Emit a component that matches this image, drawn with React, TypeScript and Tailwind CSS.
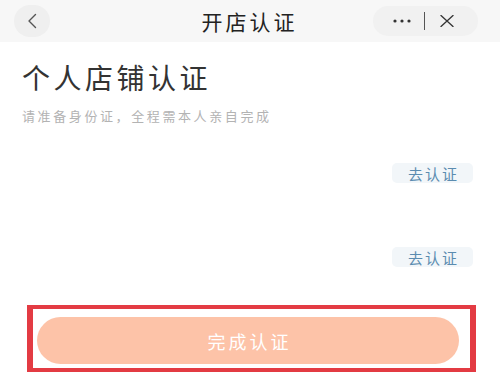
import React from 'react';

const font = { fontFamily: '"Noto Sans CJK SC", "Noto Sans", sans-serif' };

function Header() {
  return (
    <div className="grid h-[42px] grid-cols-[1fr_auto_1fr] items-center bg-[#f7f7f7] pl-[14px] pr-[22px]">
      <div className="flex">
        <div className="flex h-[32px] w-[36px] items-center justify-center rounded-full bg-[#efefef]">
          <svg width="10" height="16" viewBox="0 0 10 16" fill="none">
            <path d="M8.5 1.5 2 8l6.5 6.5" stroke="#555" strokeWidth="1.4" strokeLinecap="round" strokeLinejoin="round" />
          </svg>
        </div>
      </div>
      <div className="pl-[7px] text-[21px] leading-none tracking-[3px] text-[#222]">开店认证</div>
      <div className="flex justify-end">
        <div className="flex h-[30px] w-[105px] items-center rounded-full bg-[#f1f1f1] pl-[20px]">
          <svg width="18" height="4" viewBox="0 0 18 4">
            <circle cx="2" cy="2" r="1.6" fill="#333" />
            <circle cx="9" cy="2" r="1.6" fill="#333" />
            <circle cx="16" cy="2" r="1.6" fill="#333" />
          </svg>
          <div className="ml-[13px] h-[18px] w-px bg-[#555]" />
          <svg className="ml-[15px]" width="14" height="12" viewBox="0 0 14 12" fill="none">
            <path d="M1 0.5 13 11.5M13 0.5 1 11.5" stroke="#333" strokeWidth="1.3" strokeLinecap="round" />
          </svg>
        </div>
      </div>
    </div>
  );
}

function GoButton() {
  return (
    <div className="flex justify-end pr-[27px]">
      <div className="flex h-[20px] w-[81px] items-center justify-center rounded-[5px] bg-[#f2f6f9] pl-[2px] text-[15px] leading-none tracking-[2px] text-[#5b8cb0]">
        去认证
      </div>
    </div>
  );
}

export default function App() {
  return (
    <div className="h-[375px] w-[500px] overflow-hidden bg-white" style={font}>
      <Header />
      <div className="px-[22px]">
        <h1 className="mt-[21px] text-[28px] leading-none tracking-[3.5px] text-[#333]">个人店铺认证</h1>
        <p className="mt-[18px] text-[13px] leading-none tracking-[2.6px] text-[#b3b3b3]">
          请准备身份证，全程需本人亲自完成
        </p>
      </div>
      <div className="mt-[41px]">
        <GoButton />
      </div>
      <div className="mt-[64px]">
        <GoButton />
      </div>
      <div className="ml-[27px] mt-[38px] w-[449px] border-x-[6px] border-y-[4px] border-[#e33b43] pb-[4px] pl-[4px] pr-[11px] pt-[8px]">
        <div className="flex h-[47px] items-center justify-center rounded-full bg-[#fdc3a8] pl-[3px] text-[18px] leading-none tracking-[3px] text-white">
          完成认证
        </div>
      </div>
    </div>
  );
}
